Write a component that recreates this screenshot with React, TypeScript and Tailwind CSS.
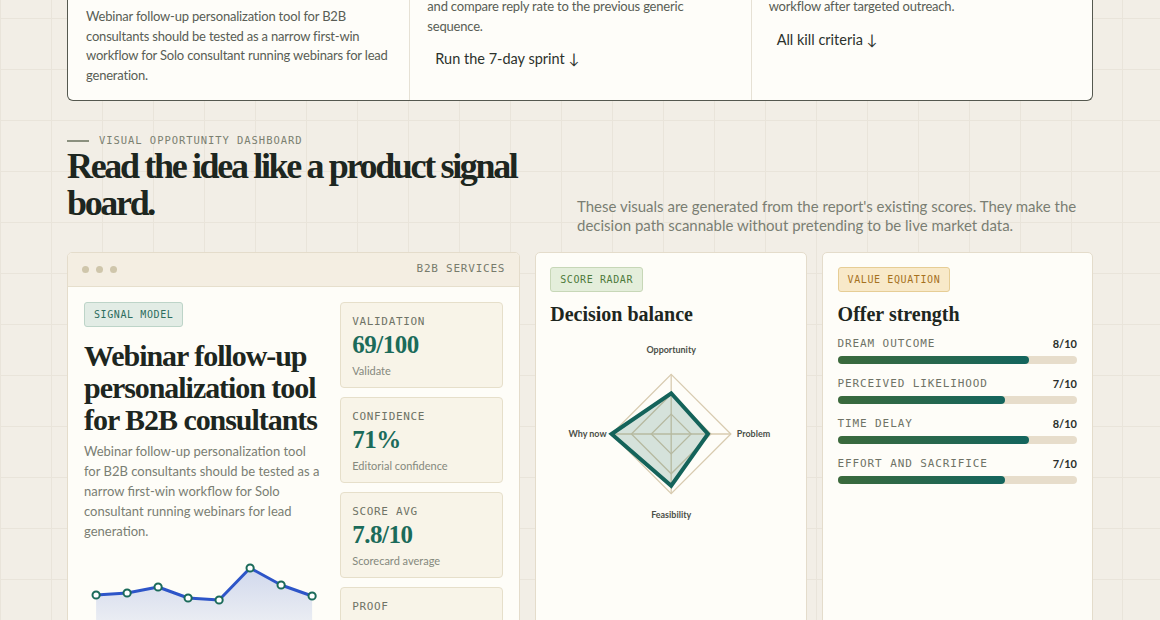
import React from "react";

const sans = "font-['Lato','Noto_Sans',sans-serif]";
const serif = "font-['Liberation_Serif','DejaVu_Serif',serif]";
const mono = "font-['DejaVu_Sans_Mono','Liberation_Mono',monospace]";

const stats = [
  { label: "VALIDATION", value: "69/100", note: "Validate" },
  { label: "CONFIDENCE", value: "71%", note: "Editorial confidence" },
  { label: "SCORE AVG", value: "7.8/10", note: "Scorecard average" },
  { label: "PROOF", value: "3/5", note: "Evidence points" },
];

const levers = [
  { label: "DREAM OUTCOME", score: 8 },
  { label: "PERCEIVED LIKELIHOOD", score: 7 },
  { label: "TIME DELAY", score: 8 },
  { label: "EFFORT AND SACRIFICE", score: 7 },
];

const trend = [
  [12, 40],
  [43, 38],
  [74, 32],
  [104, 43],
  [135, 45],
  [166, 13],
  [197, 30],
  [228, 41],
];

function TrendChart() {
  const line = trend.map(([x, y]) => `${x},${y}`).join(" ");
  const area = `M12,90 L${trend.map(([x, y]) => `${x},${y}`).join(" L")} L228,90 Z`;
  return (
    <svg viewBox="0 0 238 90" className="block h-[90px] w-full">
      <defs>
        <linearGradient id="trendFill" x1="0" y1="0" x2="0" y2="1">
          <stop offset="0" stopColor="#2f56c4" stopOpacity="0.22" />
          <stop offset="1" stopColor="#2f56c4" stopOpacity="0.04" />
        </linearGradient>
      </defs>
      <path d={area} fill="url(#trendFill)" />
      <polyline points={line} fill="none" stroke="#2d55c8" strokeWidth="3" strokeLinejoin="round" strokeLinecap="round" />
      {trend.map(([x, y], i) => (
        <circle key={i} cx={x} cy={y} r="3.6" fill="#ffffff" stroke="#1b6b5a" strokeWidth="2" />
      ))}
    </svg>
  );
}

function Radar() {
  const cx = 136;
  const cy = 103;
  const ring = (r: number) => `${cx},${cy - r} ${cx + r},${cy} ${cx},${cy + r} ${cx - r},${cy}`;
  const data = `${cx},${cy - 41} ${cx + 37},${cy} ${cx},${cy + 52} ${cx - 60},${cy}`;
  return (
    <svg viewBox="0 0 271 210" className="block h-[210px] w-full">
      {[20, 40, 60].map((r) => (
        <polygon key={r} points={ring(r)} fill="none" stroke="#d8cbb0" strokeWidth="1.3" />
      ))}
      <line x1={cx} y1={cy - 60} x2={cx} y2={cy + 60} stroke="#d8cbb0" strokeWidth="1.3" />
      <line x1={cx - 60} y1={cy} x2={cx + 60} y2={cy} stroke="#d8cbb0" strokeWidth="1.3" />
      <polygon points={data} fill="#1b6b5a" fillOpacity="0.18" stroke="#14635a" strokeWidth="4" strokeLinejoin="miter" />
      <g fontFamily="Lato, 'Noto Sans', sans-serif" fontSize="9" fontWeight="700" fill="#4b5048">
        <text x={cx} y={cy - 81} textAnchor="middle">Opportunity</text>
        <text x={cx + 66} y={cy + 3} textAnchor="start">Problem</text>
        <text x={cx} y={cy + 85} textAnchor="middle">Feasibility</text>
        <text x={cx - 65} y={cy + 3} textAnchor="end">Why now</text>
      </g>
    </svg>
  );
}

export default function App() {
  return (
    <div
      className={`h-[620px] overflow-hidden bg-[#f2eee6] bg-[linear-gradient(to_right,#e9e4da_1px,transparent_1px),linear-gradient(to_bottom,#e9e4da_1px,transparent_1px)] bg-[size:51px_51px] bg-[position:0_18px] ${sans}`}
    >
      <div className="mx-auto w-[1026px]">
        {/* next-step summary strip */}
        <div className="grid grid-cols-3 rounded-b-[6px] border border-t-0 border-[#55584f] bg-[#fefdf9] text-[13px] leading-[19.5px] tracking-[-0.015em] text-[#595d55]">
          <div className="px-[18px] pt-[7px] pb-[15px]">
            <p>
              Webinar follow-up personalization tool for B2B consultants should be tested as a narrow first-win
              workflow for Solo consultant running webinars for lead generation.
            </p>
          </div>
          <div className="border-l border-[#e6e1d5] px-[17px]">
            <p className="-mt-[3px]">and compare reply rate to the previous generic sequence.</p>
            <a className="mt-[5px] inline-block px-[8px] py-[8px] text-[14.5px] leading-[20px] tracking-normal text-[#2c322d]">
              Run the 7-day sprint ↓
            </a>
          </div>
          <div className="border-l border-[#e6e1d5] px-[17px]">
            <p className="-mt-[3px]">workflow after targeted outreach.</p>
            <a className="mt-[5px] inline-block px-[8px] py-[8px] text-[14.5px] leading-[20px] tracking-normal text-[#2c322d]">
              All kill criteria ↓
            </a>
          </div>
        </div>

        {/* section header */}
        <div className="mt-[32px] flex items-end justify-between">
          <div className="pb-[13px]">
            <div className={`flex items-center gap-[10px] text-[10.5px] tracking-[0.09em] text-[#7b8070] ${mono}`}>
              <span className="h-[2px] w-[22px] bg-[#8b907f]" />
              VISUAL OPPORTUNITY DASHBOARD
            </div>
            <h2
              className={`-mt-[1px] w-[470px] text-[36px] font-bold leading-[37px] tracking-[-0.065em] text-[#1d2620] ${serif}`}
            >
              Read the idea like a product signal board.
            </h2>
          </div>
          <p className="w-[516px] text-[15px] leading-[19px] text-[#7a7e73]">
            These visuals are generated from the report's existing scores. They make the decision path scannable
            without pretending to be live market data.
          </p>
        </div>

        {/* dashboard cards */}
        <div className="mt-[17px] grid grid-cols-[1.67fr_1fr_1fr] gap-[15px]">
          {/* signal model */}
          <div className="overflow-hidden rounded-[5px] border border-[#e4dccb] bg-[#fefdf8]">
            <div className="flex h-[34px] items-center justify-between border-b border-[#e6dfcd] bg-[#f4eee2] px-[14px]">
              <div className="flex gap-[7px]">
                <span className="h-[7px] w-[7px] rounded-full bg-[#cfc6ab]" />
                <span className="h-[7px] w-[7px] rounded-full bg-[#cfc6ab]" />
                <span className="h-[7px] w-[7px] rounded-full bg-[#cfc6ab]" />
              </div>
              <span className={`text-[11px] tracking-[0.07em] text-[#777b6c] ${mono}`}>B2B SERVICES</span>
            </div>
            <div className="grid grid-cols-[1fr_163px] gap-[18px] px-[16px] pt-[15px]">
              <div>
                <span
                  className={`block w-fit rounded-[3px] border border-[#bdd4c8] bg-[#e2ece5] px-[9px] py-[5px] text-[10px] leading-[13px] tracking-[0.06em] text-[#2d6d5e] ${mono}`}
                >
                  SIGNAL MODEL
                </span>
                <h3
                  className={`mt-[13px] text-[30px] font-bold leading-[32px] tracking-[-0.035em] text-[#1d2620] ${serif}`}
                >
                  Webinar follow-up personalization tool for B2B consultants
                </h3>
                <p className="mt-[5px] text-[13px] leading-[20px] text-[#7a7e73]">
                  Webinar follow-up personalization tool for B2B consultants should be tested as a narrow first-win
                  workflow for Solo consultant running webinars for lead generation.
                </p>
                <div className="mt-[14px]">
                  <TrendChart />
                </div>
              </div>
              <div className="flex flex-col gap-[9px]">
                {stats.map((s) => (
                  <div key={s.label} className="h-[86px] rounded-[4px] border border-[#e6dfca] bg-[#f8f4e8] px-[11px] pt-[12px]">
                    <div className={`text-[11px] leading-[14px] tracking-[0.06em] text-[#6f7366] ${mono}`}>{s.label}</div>
                    <div className={`mt-[1px] text-[25px] font-bold leading-[30px] tracking-[-0.02em] text-[#1b6b5a] ${serif}`}>
                      {s.value}
                    </div>
                    <div className="mt-[4px] text-[11px] leading-[14px] text-[#85897d]">{s.note}</div>
                  </div>
                ))}
              </div>
            </div>
          </div>

          {/* score radar */}
          <div className="h-[400px] rounded-[5px] border border-[#e4dccb] bg-[#fefdf8] px-[14px] pt-[14px]">
            <span
              className={`block w-fit rounded-[3px] border border-[#c7d7b7] bg-[#e4eedb] px-[9px] py-[5px] text-[10px] leading-[13px] tracking-[0.06em] text-[#4d7a3a] ${mono}`}
            >
              SCORE RADAR
            </span>
            <h3 className={`mt-[9px] text-[20px] font-bold leading-[26px] text-[#1d2620] ${serif}`}>Decision balance</h3>
            <div className="-mx-[14px] mt-[4px]">
              <Radar />
            </div>
          </div>

          {/* value equation */}
          <div className="h-[400px] rounded-[5px] border border-[#e4dccb] bg-[#fefdf8] px-[15px] pt-[14px]">
            <span
              className={`block w-fit rounded-[3px] border border-[#e6cd95] bg-[#f8e9c9] px-[9px] py-[5px] text-[10px] leading-[13px] tracking-[0.06em] text-[#a6711f] ${mono}`}
            >
              VALUE EQUATION
            </span>
            <h3 className={`mt-[9px] text-[20px] font-bold leading-[26px] text-[#1d2620] ${serif}`}>Offer strength</h3>
            <div className="mt-[10px] flex flex-col gap-[13px]">
              {levers.map((l) => (
                <div key={l.label}>
                  <div className="flex items-center justify-between">
                    <span className={`text-[11px] leading-[14px] tracking-[0.08em] text-[#6f7366] ${mono}`}>{l.label}</span>
                    <span className="text-[11px] font-bold leading-[14px] text-[#2a2f2b]">{l.score}/10</span>
                  </div>
                  <div className="mt-[5px] h-[8px] rounded-full bg-[#e7ddcb]">
                    <div
                      className="h-full rounded-full bg-[linear-gradient(to_right,#3b6a3c,#14655e)]"
                      style={{ width: `${l.score * 10}%` }}
                    />
                  </div>
                </div>
              ))}
            </div>
          </div>
        </div>
      </div>
    </div>
  );
}
